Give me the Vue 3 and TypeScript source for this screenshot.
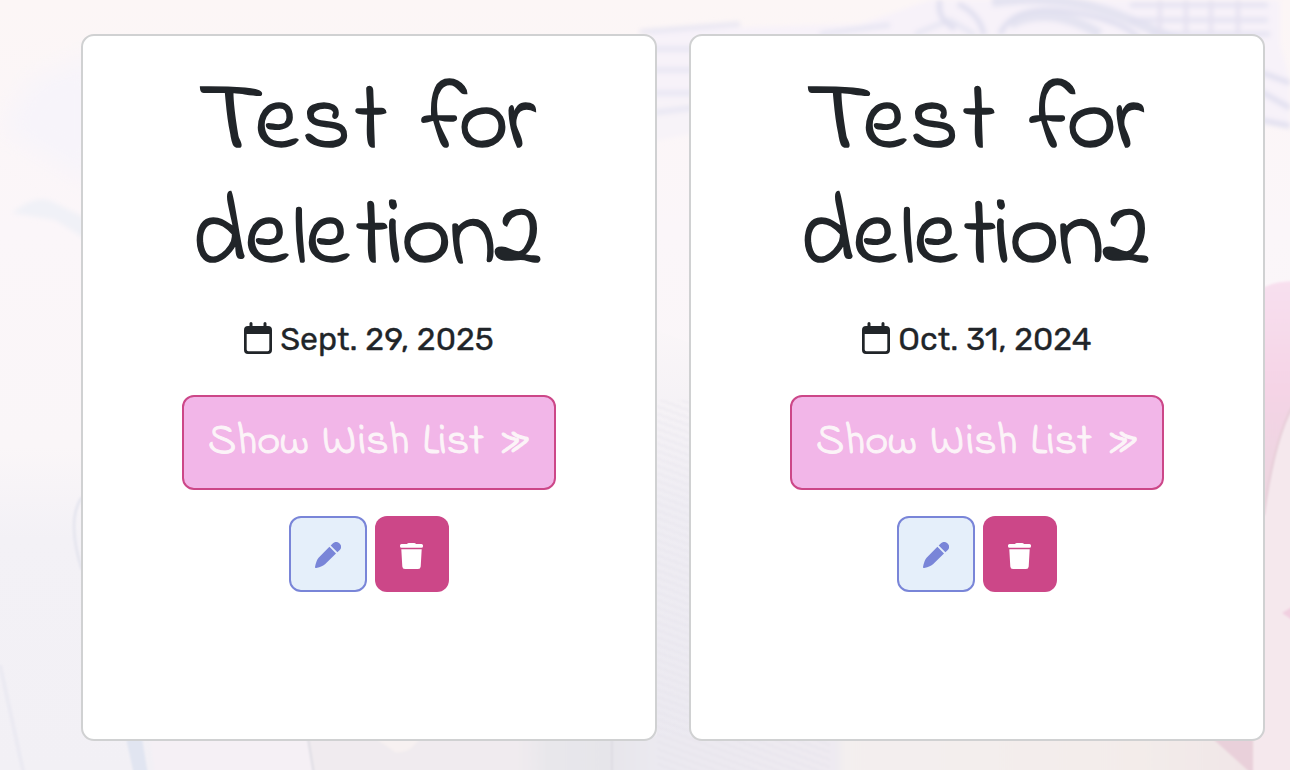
<script setup lang="ts">
interface Run {
  text: string
  gap: number
  shape?: 'wide' | 'short'
}

interface WishList {
  id: number
  date: string
}

// Heading letters with the letter spacing, in pixels, that each run takes.
const titleLines: Run[][] = [
  [
    { text: 'T', gap: 1, shape: 'wide' },
    { text: 'es', gap: 4 },
    { text: 't', gap: 0 },
    { text: ' ', gap: 11 },
    { text: 'f', gap: -8 },
    { text: 'o', gap: -3 },
    { text: 'r', gap: 4 },
  ],
  [
    { text: 'd', gap: -1 },
    { text: 'e', gap: 4 },
    { text: 'l', gap: -2, shape: 'short' },
    { text: 'e', gap: 7 },
    { text: 'ti', gap: -2 },
    { text: 'on', gap: -2 },
    { text: '2', gap: 4 },
  ],
]

const lists: WishList[] = [
  { id: 1, date: 'Sept. 29, 2025' },
  { id: 2, date: 'Oct. 31, 2024' },
]
</script>

<template>
  <main class="page">
    <svg class="backdrop" viewBox="0 0 1290 770" preserveAspectRatio="none" aria-hidden="true">
      <defs>
        <linearGradient id="wall" x1="0" y1="0" x2="0" y2="1">
          <stop offset="0" stop-color="#fcf6f6" />
          <stop offset=".3" stop-color="#fbf6f9" />
          <stop offset=".58" stop-color="#faf6f8" />
          <stop offset=".7" stop-color="#f3f1f6" />
          <stop offset="1" stop-color="#f2f0f5" />
        </linearGradient>
        <linearGradient id="knit" x1="0" y1="0" x2="0" y2="1">
          <stop offset="0" stop-color="#faf6f8" />
          <stop offset=".4" stop-color="#efedf3" />
          <stop offset="1" stop-color="#ebe9f0" />
        </linearGradient>
        <linearGradient id="floor" x1="0" y1="0" x2="1" y2="0">
          <stop offset="0" stop-color="#f0ebef" />
          <stop offset=".22" stop-color="#f0ebef" />
          <stop offset=".25" stop-color="#e8e7eb" />
          <stop offset=".31" stop-color="#e6e5ea" />
          <stop offset=".36" stop-color="#ebe9f0" />
          <stop offset=".54" stop-color="#eeeaf1" />
          <stop offset=".55" stop-color="#f3efef" />
          <stop offset=".85" stop-color="#f3ecea" />
          <stop offset="1" stop-color="#f0e3e6" />
        </linearGradient>
        <linearGradient id="petal" x1="0" y1="0" x2="0" y2="1">
          <stop offset="0" stop-color="#f8e0ef" />
          <stop offset=".45" stop-color="#f5d4e6" />
          <stop offset="1" stop-color="#ead5de" />
        </linearGradient>
        <pattern id="weave" width="7" height="7" patternUnits="userSpaceOnUse" patternTransform="rotate(20)">
          <path d="M0 2 Q3.500 5 7 2" fill="none" stroke="#dfdde7" stroke-width="1.500" opacity=".4" />
        </pattern>
        <filter id="soft"><feGaussianBlur stdDeviation="2.5" /></filter>
        <filter id="haze"><feGaussianBlur stdDeviation="12" /></filter>
        <filter id="edge"><feGaussianBlur stdDeviation="1" /></filter>
      </defs>
      <rect width="1290" height="770" fill="url(#wall)" />
      <path d="M30 80 L100 50 V190 L0 130Z" fill="#f7f4fa" filter="url(#haze)" />
      <g filter="url(#soft)">
        <path d="M12 213 Q38 192 55 203 L100 225 V248 L55 220Z" fill="#f0f1f7" />
        <path d="M650 30 L860 24 L930 0 H1280 V45 L1290 80 V128 L1240 110 H650Z" fill="#f7f2f9" />
        <path d="M650 100 H700 V132 L650 142Z" fill="#f7f3f8" />
        <g fill="none" stroke="#dfdeef" stroke-width="5">
          <path d="M650 49 H700 M650 70 H700 M650 93 H700 M650 113 L700 107" opacity=".65" />
          <path d="M640 32 L740 24 M820 34 L890 25 M915 34 L950 20 L975 35" opacity=".65" />
          <path d="M940 0 Q936 18 955 29 M958 4 Q980 14 984 35 M1000 34 Q1014 3 1070 12 T1140 40" />
          <path d="M992 2 Q1065 -8 1130 20 T1168 36 M1010 24 Q1050 4 1100 34" stroke-width="10" opacity=".8" />
          <path d="M1130 5 H1268 M1130 20 H1268 M1150 34 H1270" opacity=".75" />
          <path d="M1260 72 L1290 83 M1260 91 L1290 108 M1260 120 L1290 126" />
        </g>
        <path d="M1160 0 V35 M1186 0 V35 M1211 0 V35 M1238 0 V35" stroke="#e5e1f0" stroke-width="4" />
      </g>
      <path d="M657 330 L690 343 V770 H657Z" fill="url(#knit)" />
      <g filter="url(#edge)">
        <path d="M300 735 H1290 V775 H300Z" fill="url(#floor)" />
        <path d="M657 400 H690 V735 H830 V775 H657Z" fill="url(#weave)" />
        <path d="M150 738 H308 L314 775 H155Z" fill="#f5f0f5" />
        <path d="M126 738 H142 L148 775 H134Z" fill="#e1e5f1" />
        <path d="M375 738 H420 Q410 754 395 752Z" fill="#f7f1f1" />
        <path d="M612 738 V775 M308 738 L314 775" stroke="#dddce3" stroke-width="2" />
        <path d="M82 497 Q66 520 82 570" fill="none" stroke="#e6e6ef" stroke-width="3" />
        <path d="M0 665 L24 775" stroke="#ebeaf2" stroke-width="4" />
        <path d="M1262 400 H1295 V775 H1253Z" fill="#f5e8ed" />
        <path d="M1262 288 Q1275 281 1295 281 V405 Q1274 440 1264 515Z" fill="url(#petal)" />
        <path d="M1293 405 Q1274 440 1264 515" fill="none" stroke="#e6ced8" stroke-width="2" />
        <path d="M1282 613 L1295 605 V622Z" fill="#f1cfe0" />
        <path d="M1212 738 H1253 V775Z" fill="#e9d0da" />
      </g>
    </svg>

    <section class="cards">
      <article v-for="list in lists" :key="list.id" class="card">
        <h2 class="title">
          <span v-for="(line, row) in titleLines" :key="row" class="line"><span v-for="(run, i) in line" :key="i" :class="run.shape" :style="{ letterSpacing: run.gap + 'px' }">{{ run.text }}</span></span>
        </h2>
        <p class="date">
          <svg class="calendar" viewBox="0 0 28 32" aria-hidden="true">
            <path fill="currentColor" fill-rule="evenodd" d="M7 0a1.5 1.5 0 0 1 1.5 1.5V4h11V1.5a1.5 1.5 0 0 1 3 0V4H24a4 4 0 0 1 4 4v20a4 4 0 0 1-4 4H4a4 4 0 0 1-4-4V8a4 4 0 0 1 4-4h1.500V1.500A1.500 1.500 0 0 1 7 0ZM2.700 12v15.600a1.700 1.700 0 0 0 1.700 1.700h19.200a1.700 1.700 0 0 0 1.700-1.700V12Z" />
          </svg>
          <span class="day">{{ list.date }}</span>
        </p>
        <button class="show" type="button"><span>Show Wish List</span><span>»</span></button>
        <div class="actions">
          <button class="edit" type="button" aria-label="Edit">
            <svg viewBox="0 0 26 26" width="26" height="26" aria-hidden="true">
              <path fill="currentColor" d="M14.400 4.800 21 11.400 10 22.300Q7.800 24.500 1.200 26 0 26.200 0 25 1.300 18.200 3.600 15.700ZM15.700 3.600 18 1.300a4.300 4.300 0 0 1 6.300 0l.5.500a4.300 4.300 0 0 1 0 6.200l-2.400 2.300Z" />
            </svg>
          </button>
          <button class="remove" type="button" aria-label="Delete">
            <svg viewBox="0 0 23 26" width="23" height="26" aria-hidden="true">
              <path fill="currentColor" d="M7 1Q7.500 0 9 0h5q1.500 0 2 1h5.500a1.500 1.500 0 0 1 1.500 1.500v.8A1.500 1.500 0 0 1 21.500 4.800h-20A1.500 1.500 0 0 1 0 3.300v-.8A1.500 1.500 0 0 1 1.500 1ZM1.300 6.200h20.400l-1 17.300q-.2 2.500-2.700 2.500H5q-2.500 0-2.700-2.500Z" />
            </svg>
          </button>
        </div>
      </article>
    </section>
  </main>
</template>

<style>
body {
  margin: 0;
  overflow: hidden;
}
</style>

<style scoped>
.page {
  position: relative;
  width: 1290px;
  height: 770px;
  overflow: hidden;
  color: #212529;
}

.backdrop {
  position: absolute;
  inset: 0;
  width: 100%;
  height: 100%;
}

.cards {
  position: relative;
  display: flex;
  gap: 32px;
  padding: 34px 25px 29px 81px;
}

.card {
  box-sizing: border-box;
  width: 576px;
  height: 707px;
  display: flex;
  flex-direction: column;
  align-items: center;
  padding-top: 31px;
  background: #fff;
  border: 2px solid #d0d1d2;
  border-radius: 13px;
}

.title {
  width: 420px;
  height: 230px;
  margin: 0;
  font: 400 96px/115px "Indie Flower", Lato, sans-serif;
  text-align: center;
  -webkit-text-stroke: 1.7px currentColor;
}

.line {
  display: block;
  height: 115px;
  white-space: pre;
}

.wide {
  display: inline-block;
  transform: scaleX(1.2);
  transform-origin: 5px 50%;
}

.short {
  display: inline-block;
  transform: scaleY(0.82);
  transform-origin: 50% 82px;
}

.date {
  display: flex;
  align-items: center;
  gap: 8px;
  height: 40px;
  margin: 21px 0 0;
  font: 400 32px/40px Rubik, Roboto, sans-serif;
  -webkit-text-stroke: 0.3px currentColor;
}

.day {
  padding-top: 2px;
}

.calendar {
  width: 28px;
  height: 32px;
}

button {
  box-sizing: border-box;
  display: flex;
  align-items: center;
  justify-content: center;
  padding: 0;
  border-radius: 12px;
}

.show {
  width: 374px;
  height: 95px;
  gap: 17px;
  margin-top: 37px;
  padding-bottom: 2px;
  font: 400 44px/60px "Indie Flower", Lato, sans-serif;
  -webkit-text-stroke: 1px currentColor;
  word-spacing: 2px;
  white-space: nowrap;
  color: #fcf4f8;
  background: #f2b6e8;
  border: 2px solid #cc4788;
}

.actions {
  display: flex;
  gap: 8px;
  margin-top: 26px;
}

.edit {
  width: 78px;
  height: 76px;
  padding-top: 1px;
  color: #7985d8;
  background: #e5effa;
  border: 2px solid #7985d8;
}

.remove {
  width: 74px;
  height: 76px;
  padding: 3px 1px 0 0;
  color: #fff;
  background: #cc4788;
  border: 0;
}
</style>
